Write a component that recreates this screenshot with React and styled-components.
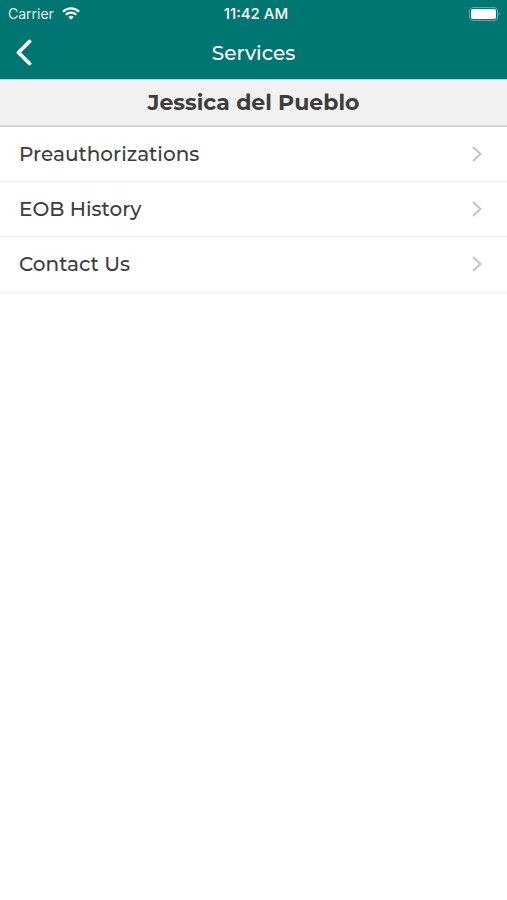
import React from "react";
import styled, { createGlobalStyle } from "styled-components";

const GlobalStyle = createGlobalStyle`
  * { box-sizing: border-box; }
  body { margin: 0; background: #fff; font-family: "Montserrat", "Inter", sans-serif; color: #3d3d3d; }
`;

const Page = styled.div`
  min-height: 100vh;
  background: #fff;
`;

const Header = styled.header`
  background: #007672;
  color: #fff;
`;

const StatusBar = styled.div`
  display: grid;
  grid-template-columns: 1fr auto 1fr;
  align-items: center;
  height: 27px;
  padding: 0 7px 0 8px;
  font-family: "Inter", sans-serif;
  font-size: 14px;
  line-height: 16px;
`;

const Carrier = styled.span`
  display: flex;
  align-items: center;
  gap: 8px;
  color: #e3f0ef;
`;

const Time = styled.span`
  font-size: 15px;
  font-weight: 500;
  padding-left: 4px;
`;

const Battery = styled.svg`
  justify-self: end;
`;

const NavBar = styled.div`
  display: grid;
  grid-template-columns: 48px 1fr 48px;
  align-items: center;
  height: 52px;
`;

const BackButton = styled.button`
  display: flex;
  align-items: center;
  justify-content: center;
  height: 52px;
  padding: 0;
  border: 0;
  background: none;
  color: inherit;
  cursor: pointer;
`;

const Title = styled.h1`
  margin: 0;
  font-size: 20px;
  line-height: 24px;
  font-weight: 500;
  text-align: center;
`;

const MemberName = styled.h2`
  margin: 0;
  padding: 10px 16px 9px;
  background: #f1f1f1;
  border-top: 1px solid #b9d6d5;
  border-bottom: 2px solid #d6d6d6;
  font-size: 22px;
  line-height: 26px;
  font-weight: 700;
  text-align: center;
`;

const Menu = styled.ul`
  margin: 0;
  padding: 0;
  list-style: none;
  border-bottom: 2px solid #f7f7f7;
`;

const MenuLink = styled.a`
  display: flex;
  align-items: center;
  justify-content: space-between;
  height: 55px;
  padding: 0 24px 0 19px;
  border-bottom: 1px solid #ededed;
  color: inherit;
  font-size: 20px;
  line-height: 26px;
  font-weight: 500;
  text-decoration: none;

  li:last-child > & {
    border-bottom-color: #f7f7f7;
  }
`;

const services = ["Preauthorizations", "EOB History", "Contact Us"];

export default function App() {
  return (
    <Page>
      <GlobalStyle />
      <Header>
        <StatusBar>
          <Carrier>
            Carrier
            <svg width="18" height="13" viewBox="0 0 18 13" fill="none" stroke="#fff" strokeWidth="2.3" aria-hidden="true">
              <path d="M1 4.7a11.4 11.4 0 0 1 16 0M3.8 7.8a7.4 7.4 0 0 1 10.4 0" />
              <path d="M6.3 10.1a4 4 0 0 1 5.4 0L9 12.8z" fill="#fff" stroke="none" />
            </svg>
          </Carrier>
          <Time>11:42 AM</Time>
          <Battery width="31" height="14" viewBox="0 0 31 14" role="img" aria-label="Battery full">
            <rect x="0.5" y="0.5" width="28" height="13" rx="3.5" fill="none" stroke="#62aaa8" />
            <rect x="2" y="2" width="25" height="10" rx="2" fill="#fff" />
            <path d="M29.5 4.5q2 2.5 0 5z" fill="#62aaa8" />
          </Battery>
        </StatusBar>
        <NavBar>
          <BackButton type="button" aria-label="Back">
            <svg width="18" height="28" viewBox="0 0 18 28" fill="none" stroke="currentColor" strokeWidth="3.8" strokeLinecap="round" strokeLinejoin="round" aria-hidden="true">
              <path d="M14.5 2.5L3.5 13.5l11 11" />
            </svg>
          </BackButton>
          <Title>Services</Title>
        </NavBar>
      </Header>
      <main>
        <MemberName>Jessica del Pueblo</MemberName>
        <Menu>
          {services.map((service) => (
            <li key={service}>
              <MenuLink href="#">
                {service}
                <svg width="12" height="16" viewBox="0 0 12 16" fill="none" stroke="#c4c4c4" strokeWidth="2" aria-hidden="true">
                  <path d="M2 1l7.5 7L2 15" />
                </svg>
              </MenuLink>
            </li>
          ))}
        </Menu>
      </main>
    </Page>
  );
}
